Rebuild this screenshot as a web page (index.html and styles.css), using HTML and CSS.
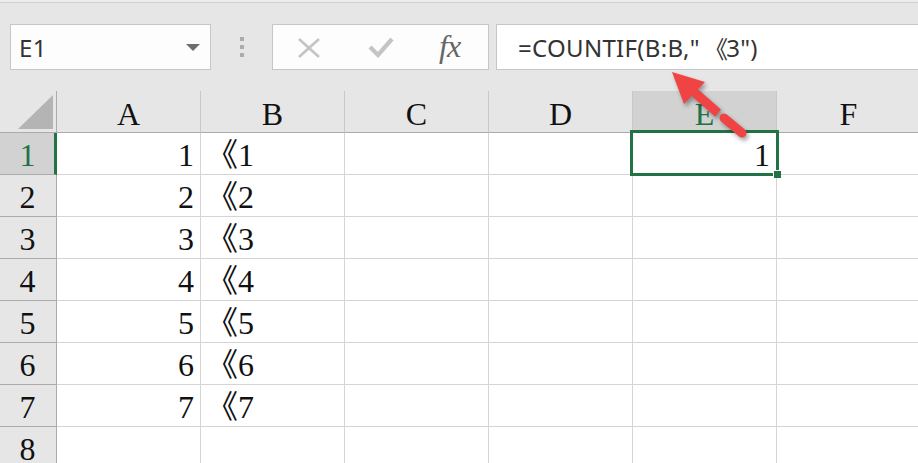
FILE: index.html
```html
<!DOCTYPE html>
<html>
<head>
<meta charset="utf-8">
<link rel="stylesheet" href="styles.css">
</head>
<body>
<div class="app">
  <div class="topband"></div>
  <div class="toolbar">
    <div class="namebox">
      <span class="name">E1</span>
      <svg class="caret" width="14" height="8" viewBox="0 0 14 8"><polygon points="0,0 14,0 7,7" fill="#6d6d6d"/></svg>
    </div>
    <div class="grip"><i></i><i></i><i></i></div>
    <div class="fxbox">
      <svg class="ic-x" width="24" height="20" viewBox="0 0 24 20"><path d="M2 1 L22 19 M22 1 L2 19" stroke="#c4c4c4" stroke-width="2.6" fill="none"/></svg>
      <svg class="ic-ok" width="26" height="22" viewBox="0 0 26 22"><path d="M2 11 L10 19 L24 3" stroke="#c4c4c4" stroke-width="4.2" fill="none"/></svg>
      <span class="fx">fx</span>
    </div>
    <div class="formula">=COUNTIF(B:B,"<span class="q">《</span>3")</div>
  </div>
  <div class="sheet">
    <div class="grid">
      <div class="corner"><svg width="35" height="34" viewBox="0 0 35 34"><polygon points="35,0 35,34 0,34" fill="#b4b4b4"/></svg></div>
      <div class="ch">A</div><div class="ch">B</div><div class="ch">C</div><div class="ch">D</div><div class="ch sel">E</div><div class="ch">F</div>

      <div class="rh sel">1</div><div class="c num">1</div><div class="c txt">《1</div><div class="c"></div><div class="c"></div><div class="c num">1</div><div class="c"></div>
      <div class="rh">2</div><div class="c num">2</div><div class="c txt">《2</div><div class="c"></div><div class="c"></div><div class="c"></div><div class="c"></div>
      <div class="rh">3</div><div class="c num">3</div><div class="c txt">《3</div><div class="c"></div><div class="c"></div><div class="c"></div><div class="c"></div>
      <div class="rh">4</div><div class="c num">4</div><div class="c txt">《4</div><div class="c"></div><div class="c"></div><div class="c"></div><div class="c"></div>
      <div class="rh">5</div><div class="c num">5</div><div class="c txt">《5</div><div class="c"></div><div class="c"></div><div class="c"></div><div class="c"></div>
      <div class="rh">6</div><div class="c num">6</div><div class="c txt">《6</div><div class="c"></div><div class="c"></div><div class="c"></div><div class="c"></div>
      <div class="rh">7</div><div class="c num">7</div><div class="c txt">《7</div><div class="c"></div><div class="c"></div><div class="c"></div><div class="c"></div>
      <div class="rh">8</div><div class="c"></div><div class="c"></div><div class="c"></div><div class="c"></div><div class="c"></div><div class="c"></div>
    </div>
    <div class="selection"><div class="handle"></div></div>
  </div>
  <svg class="arrow" width="918" height="463" viewBox="0 0 918 463">
    <g fill="#f04444" stroke="#f04444" class="arrow-g">
      <polygon points="672,72 684,104 705,82" stroke="none"/>
      <line x1="693" y1="91" x2="718" y2="113" stroke-width="9"/>
      <line x1="724" y1="118" x2="742" y2="133" stroke-width="9" stroke-linecap="round"/>
    </g>
  </svg>
</div>
</body>
</html>
```

FILE: styles.css
```css
html, body {
  margin: 0;
  padding: 0;
  background: #e6e6e6;
  overflow: hidden;
}
.app {
  position: relative;
  width: 918px;
  height: 463px;
  overflow: hidden;
  background: #e6e6e6;
}
.topband {
  height: 2px;
  background: #ececec;
  border-bottom: 1px solid #d2d2d2;
}
.toolbar {
  display: flex;
  align-items: stretch;
  height: 46px;
  margin-top: 21px;
}
.namebox {
  box-sizing: border-box;
  width: 201px;
  margin-left: 10px;
  background: #fdfdfd;
  border: 1px solid #c6c6c6;
  display: flex;
  align-items: center;
  justify-content: space-between;
  padding: 0 10px 0 8px;
}
.name {
  font-family: "Noto Sans", sans-serif;
  font-size: 24px;
  color: #333;
  letter-spacing: 0.5px;
}
.caret { margin-top: 1px; }
.grip {
  width: 4px;
  margin-left: 29px;
  display: flex;
  flex-direction: column;
  justify-content: center;
  gap: 4px;
}
.grip i {
  display: block;
  width: 4px;
  height: 4px;
  background: #ababab;
}
.fxbox {
  box-sizing: border-box;
  width: 217px;
  margin-left: 28px;
  background: #fdfdfd;
  border: 1px solid #c6c6c6;
  display: flex;
  align-items: center;
  padding-left: 24px;
}
.ic-x { margin-top: 1px; }
.ic-ok { margin-left: 47px; }
.fx {
  margin-left: 45px;
  font-family: "Liberation Serif", serif;
  font-style: italic;
  font-size: 32px;
  color: #666;
  margin-top: -2px;
  letter-spacing: -1px;
}
.formula {
  box-sizing: border-box;
  flex: 1;
  margin-left: 7px;
  margin-right: -4px;
  background: #fff;
  border: 1px solid #c6c6c6;
  font-family: "Noto Sans", "Noto Sans CJK SC", sans-serif;
  font-size: 24px;
  letter-spacing: 0.3px;
  color: #333;
  display: flex;
  align-items: center;
  padding-left: 21px;
  white-space: pre;
}
.formula .q {
  font-family: "Noto Sans CJK SC", sans-serif;
  margin-left: 4px;
  margin-right: -2px;
}
.sheet {
  position: relative;
  margin-top: 21px;
}
.grid {
  display: grid;
  grid-template-columns: 57px repeat(6, 144px);
  grid-auto-rows: 42px;
  font-family: "Liberation Serif", "Noto Sans CJK SC", serif;
  font-size: 32px;
  color: #111;
}
.grid > div {
  box-sizing: border-box;
  border-right: 1px solid #d4d4d4;
  border-bottom: 1px solid #d4d4d4;
  line-height: 35px;
  padding-top: 5px;
  overflow: hidden;
  white-space: nowrap;
}
.grid > .corner {
  border-right: 1px solid #ababab;
  border-bottom: 1px solid #ababab;
  display: flex;
  justify-content: flex-end;
  align-items: flex-end;
  padding: 0 3px 3px 0;
}
.corner svg { display: block; }
.grid > .ch {
  text-align: center;
  border-right: 1px solid #c8c8c8;
  border-bottom: 1px solid #ababab;
  background: #e6e6e6;
  padding-top: 6px;
}
.grid > .ch.sel {
  background: #d2d2d2;
  color: #217346;
}
.grid > .rh {
  text-align: center;
  background: #e6e6e6;
  border-right: 1px solid #ababab;
  border-bottom: 1px solid #ababab;
  padding-right: 1px;
}
.grid > .rh.sel {
  background: #d2d2d2;
  color: #217346;
  border-right: 3px solid #217346;
  padding-left: 2px;
}
.grid > .c { background: #fff; }
.grid > .num { text-align: right; padding-right: 6px; }
.grid > .txt { padding-left: 5px; }
.selection {
  position: absolute;
  left: 630px;
  top: 39px;
  width: 149px;
  height: 46px;
  box-sizing: border-box;
  border: 3px solid #217346;
}
.handle {
  position: absolute;
  right: -5px;
  bottom: -5px;
  width: 7px;
  height: 7px;
  background: #217346;
  border-left: 1px solid #fff;
  border-top: 1px solid #fff;
}
.arrow {
  position: absolute;
  left: 0;
  top: 0;
  pointer-events: none;
}
.arrow-g {
  filter: drop-shadow(2px 3px 2px rgba(0,0,0,0.35));
}
```
